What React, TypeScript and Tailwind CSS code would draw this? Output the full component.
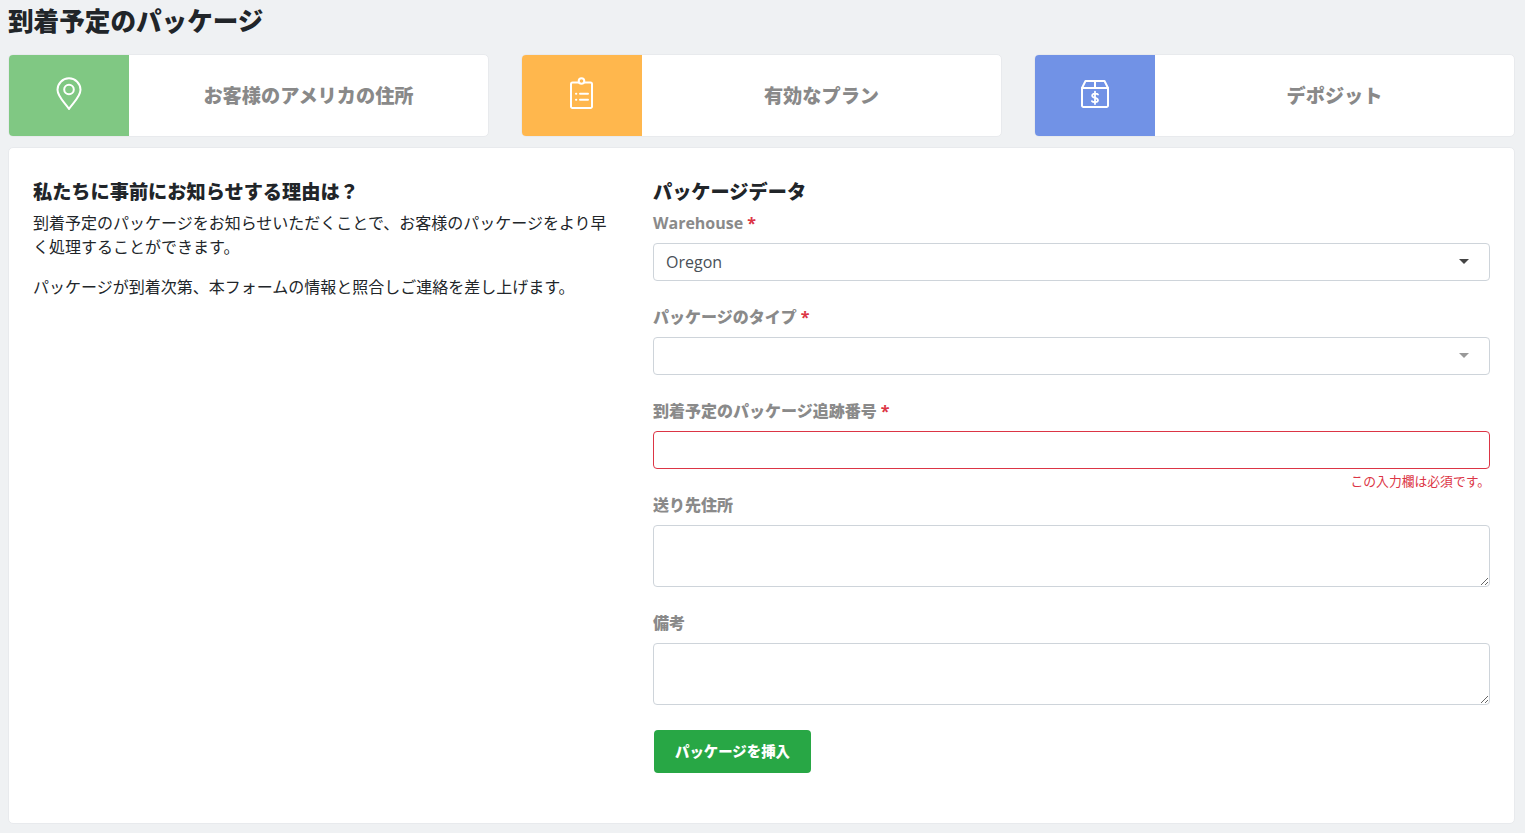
const FONT = "font-['Open_Sans','Noto_Sans_CJK_JP',sans-serif]";

function PinIcon() {
  return (
    <svg width="26" height="34" viewBox="0 0 26 34" fill="none" stroke="white" strokeWidth="2">
      <path d="M13 32 C10 27 1.5 20 1.5 12.8 A11.5 11.5 0 0 1 24.5 12.8 C24.5 20 16 27 13 32 Z" strokeLinejoin="round" />
      <circle cx="13" cy="12.5" r="4.8" />
    </svg>
  );
}

function ClipboardIcon() {
  return (
    <svg width="26" height="34" viewBox="0 0 26 34" fill="none" stroke="white" strokeWidth="2" strokeLinecap="round" strokeLinejoin="round">
      <path d="M9.5 5.5 H3.5 A1.5 1.5 0 0 0 2 7 V29.5 A1.5 1.5 0 0 0 3.5 31 H21.5 A1.5 1.5 0 0 0 23 29.5 V7 A1.5 1.5 0 0 0 21.5 5.5 H15.5" />
      <circle cx="12.5" cy="4" r="2.8" />
      <path d="M7 16.7 H7.3 M7 22.7 H7.3 M11 16.7 H19 M11 22.7 H19" />
    </svg>
  );
}

function BoxIcon() {
  return (
    <svg width="30" height="30" viewBox="0 0 30 30" fill="none" stroke="white" strokeWidth="2" strokeLinejoin="round" strokeLinecap="round">
      <path d="M2 9 L5.5 2 H24.5 L28 9 V26.5 A1.5 1.5 0 0 1 26.5 28 H3.5 A1.5 1.5 0 0 1 2 26.5 Z" />
      <path d="M2 9 H28 M15 2 V9" />
      <path d="M18 15.6 C17.2 14.4 12.2 14 12.2 16.8 C12.2 19.6 18 18.2 18 21.2 C18 23.6 13 23.4 11.9 22.2 M15 12.6 V25" strokeWidth="1.8" />
    </svg>
  );
}

function InfoCard({ color, icon, label }: { color: string; icon: React.ReactNode; label: string }) {
  return (
    <div className="flex h-[83px] overflow-hidden rounded-[5px] border border-[#e8eaed] bg-white">
      <div className={`flex w-[120px] shrink-0 items-center justify-center pb-[4px] ${color}`}>{icon}</div>
      <div className="flex flex-1 items-center justify-center pt-[2px] text-[19.2px] font-black text-[#898989]">{label}</div>
    </div>
  );
}

function Label({ text, required, latin }: { text: string; required?: boolean; latin?: boolean }) {
  return (
    <label className={`mb-2 block h-6 text-base leading-6 ${latin ? "font-bold" : "font-black"}`}>
      <span className="text-[#8a8a8a]">{text}</span>
      {required && <span className="font-bold text-[#dc3545]"> *</span>}
    </label>
  );
}

function Select({ value, muted }: { value?: string; muted?: boolean }) {
  return (
    <div className="flex h-[38px] items-center justify-between rounded-[4px] border border-[#ced4da] bg-white pl-3 pr-[20px] text-base text-[#495057]">
      <span>{value}</span>
      <span className={`mb-[2px] h-0 w-0 border-x-[5px] border-t-[5px] border-x-transparent ${muted ? "border-t-[#999999]" : "border-t-[#444444]"}`} />
    </div>
  );
}

export default function App() {
  return (
    <div className={`min-h-[833px] bg-[#eff1f3] pl-2 pr-[10px] ${FONT}`}>
      <h1 className="h-[54px] pt-[5px] text-[25.6px] font-black leading-[34px] text-[#212529]">到着予定のパッケージ</h1>
      <div className="grid grid-cols-[481px_481px_481px] gap-[32px]">
        <InfoCard color="bg-[#80c883]" icon={<PinIcon />} label="お客様のアメリカの住所" />
        <InfoCard color="bg-[#ffb74d]" icon={<ClipboardIcon />} label="有効なプラン" />
        <InfoCard color="bg-[#7192e6]" icon={<BoxIcon />} label="デポジット" />
      </div>
      <div className="mt-[10px] flex h-[677px] rounded-[5px] border border-[#e8eaed] bg-white px-6 pt-[27px]">
        <div className="w-[620px] shrink-0 pr-[40px] text-[#212529]">
          <h2 className="pt-[1px] pb-[1px] text-[19.2px] font-black leading-[32px]">私たちに事前にお知らせする理由は？</h2>
          <p className="mb-4 pt-[2px] text-base leading-6">到着予定のパッケージをお知らせいただくことで、お客様のパッケージをより早く処理することができます。</p>
          <p className="text-base leading-6">パッケージが到着次第、本フォームの情報と照合しご連絡を差し上げます。</p>
        </div>
        <div className="flex-1">
          <h2 className="pt-[1px] pb-[3px] text-[19.2px] font-black leading-[32px] text-[#212529]">パッケージデータ</h2>
          <Label text="Warehouse" required latin />
          <Select value="Oregon" />
          <div className="h-[24px]" />
          <Label text="パッケージのタイプ" required />
          <Select muted />
          <div className="h-[24px]" />
          <Label text="到着予定のパッケージ追跡番号" required />
          <input className="block h-[38px] w-full rounded-[4px] border border-[#dc3545] bg-white" />
          <div className="h-[24px] text-right text-[12.8px] leading-[24px] text-[#dc3545]">この入力欄は必須です。</div>
          <Label text="送り先住所" />
          <textarea className="block h-[62px] w-full rounded-[4px] border border-[#ced4da] bg-white" />
          <div className="h-[24px]" />
          <Label text="備考" />
          <textarea className="block h-[62px] w-full rounded-[4px] border border-[#ced4da] bg-white" />
          <button className="ml-px mt-[25px] block h-[43px] w-[157px] rounded-[4px] bg-[#28a745] pt-px text-[14.4px] font-black text-white">パッケージを挿入</button>
        </div>
      </div>
    </div>
  );
}
